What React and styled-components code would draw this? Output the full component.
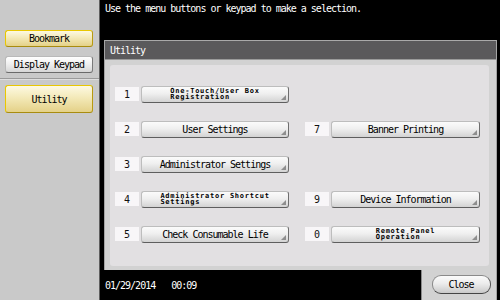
import React from 'react';
import styled, { createGlobalStyle, css } from 'styled-components';

const Global = createGlobalStyle`
  html, body { margin: 0; padding: 0; background: #000; }
  body { font-family: "DejaVu Sans Mono", "Liberation Mono", monospace; }
  #root { width: 500px; height: 300px; overflow: hidden; }
`;

const Screen = styled.div`
  display: flex;
  width: 500px;
  height: 300px;
  background: #000;
`;

const Sidebar = styled.aside`
  width: 100px;
  box-sizing: border-box;
  border-right: 1px solid #5e5e5e;
  background: #c9c9c9;
  display: flex;
  flex-direction: column;
`;

const SideGroup = styled.div`
  display: flex;
  flex-direction: column;
  gap: 9px;
  padding: ${(p) => p.$top}px 6px 0 5px;
`;

const Divider = styled.div`
  margin-top: 5px;
  height: 1px;
  background: #9a9a9a;
  border-bottom: 1px solid #dedede;
`;

const SideButton = styled.button`
  height: ${(p) => (p.$tall ? 28 : 17)}px;
  box-sizing: border-box;
  margin: 0;
  padding: 0;
  border-radius: 3px;
  font-family: inherit;
  font-size: 10px;
  letter-spacing: -1px;
  color: #000;
  ${(p) =>
    p.$active
      ? css`
          border: 1px solid #e9c700;
          border-right-color: #b89a10;
          border-bottom-color: #a88c10;
          background: linear-gradient(#fdf9e2, #f3e9b8 45%, #e4d188);
        `
      : css`
          border: 1px solid #b9b9b9;
          border-right-color: #7a7a7a;
          border-bottom-color: #6a6a6a;
          background: linear-gradient(#ffffff, #f0f0f0 45%, #d6d6d6);
        `}
`;

const Main = styled.main`
  flex: 1;
  display: flex;
  flex-direction: column;
  background: #000;
`;

const StatusBar = styled.div`
  height: 40px;
  box-sizing: border-box;
  padding: 4px 0 0 5px;
  color: #fff;
  font-size: 10px;
  line-height: 10px;
  letter-spacing: -1px;
`;

const Panel = styled.section`
  flex: 1;
  margin: 0 3px 0 4px;
  display: flex;
  flex-direction: column;
  background: #d2d2d2;
  border-left: 1px solid #a4a4a4;
  border-right: 1px solid #a4a4a4;
`;

const PanelHeader = styled.div`
  height: 20px;
  box-sizing: border-box;
  border-top: 1px solid #a9a9a9;
  border-bottom: 1px solid #9a9a9a;
  background: #5a595b;
  color: #fff;
  display: flex;
  align-items: center;
  padding-left: 5px;
  font-size: 10px;
  letter-spacing: -1px;
`;

const PanelBody = styled.div`
  flex: 1;
  display: flex;
  padding: 5px 7px 4px 5px;
`;

const InnerPanel = styled.div`
  flex: 1;
  background: #e2e0e2;
  border-radius: 3px;
  display: grid;
  grid-template-columns: 174px 175px;
  grid-auto-rows: 17px;
  column-gap: 16px;
  row-gap: 18px;
  padding: 21px 0 0 5px;
  align-content: start;
`;

const Entry = styled.div`
  display: flex;
  align-items: flex-start;
  grid-column: ${(p) => p.$col};
  grid-row: ${(p) => p.$row};
`;

const NumBox = styled.div`
  width: 24px;
  height: 14px;
  margin: 1px 2px 0 0;
  background: #f8f6f8;
  color: #111;
  font-size: 10px;
  display: flex;
  align-items: center;
  justify-content: center;
`;

const MenuButton = styled.button`
  position: relative;
  flex: 1;
  height: 17px;
  box-sizing: border-box;
  margin: 0;
  padding: 0;
  border-radius: 3px;
  border: 1px solid #bdbdbd;
  border-right-color: #6e6e6e;
  border-bottom-color: #5e5e5e;
  background: linear-gradient(#fbfbfb, #efefef 45%, #d3d3d3);
  font-family: inherit;
  color: #000;
  display: flex;
  align-items: center;
  justify-content: center;
  &::after {
    content: '';
    position: absolute;
    right: 2px;
    bottom: 2px;
    width: 0;
    height: 0;
    border-left: 5px solid transparent;
    border-bottom: 5px solid #8e8e8e;
  }
`;

const Label = styled.span`
  font-size: 10px;
  letter-spacing: -1px;
  white-space: nowrap;
`;

const SmallLabel = styled.span`
  font-size: 7px;
  font-weight: bold;
  line-height: 6px;
  letter-spacing: 0.75px;
  white-space: pre;
  text-align: left;
  margin-top: -1px;
`;

const Footer = styled.footer`
  height: 30px;
  display: flex;
`;

const DateTime = styled.div`
  flex: 1;
  display: flex;
  align-items: center;
  gap: 16px;
  padding: 0 0 0 5px;
  color: #fff;
  font-size: 10px;
  letter-spacing: -1px;
`;

const CloseTab = styled.div`
  width: 76px;
  margin-right: 3px;
  background: #d2d2d2;
  border-left: 1px solid #8a8a8a;
  border-right: 1px solid #a4a4a4;
  display: flex;
  align-items: flex-start;
  justify-content: center;
  padding-top: 5px;
  box-sizing: border-box;
`;

const CloseButton = styled.button`
  width: 59px;
  height: 19px;
  margin-left: 4px;
  box-sizing: border-box;
  border-radius: 9px;
  border: 1px solid #8a8a8a;
  border-right-color: #555;
  border-bottom-color: #444;
  background: linear-gradient(#fbfbfb, #ececec 45%, #c9c9c9);
  font-family: inherit;
  font-size: 10px;
  letter-spacing: -1px;
  color: #000;
  padding: 0;
`;

const entries = [
  { n: '1', col: 1, row: 1, small: 'One-Touch/User Box\nRegistration' },
  { n: '2', col: 1, row: 2, label: 'User Settings' },
  { n: '3', col: 1, row: 3, label: 'Administrator Settings' },
  { n: '4', col: 1, row: 4, small: 'Administrator Shortcut\nSettings' },
  { n: '5', col: 1, row: 5, label: 'Check Consumable Life' },
  { n: '7', col: 2, row: 2, label: 'Banner Printing' },
  { n: '9', col: 2, row: 4, label: 'Device Information' },
  { n: '0', col: 2, row: 5, small: 'Remote Panel\nOperation' },
];

export default function App() {
  return (
    <>
      <Global />
      <Screen>
        <Sidebar>
          <SideGroup $top={30}>
            <SideButton $active>Bookmark</SideButton>
            <SideButton>Display Keypad</SideButton>
          </SideGroup>
          <Divider />
          <SideGroup $top={5}>
            <SideButton $active $tall>Utility</SideButton>
          </SideGroup>
        </Sidebar>
        <Main>
          <StatusBar>Use the menu buttons or keypad to make a selection.</StatusBar>
          <Panel>
            <PanelHeader>Utility</PanelHeader>
            <PanelBody>
              <InnerPanel>
                {entries.map((e) => (
                  <Entry key={e.n} $col={e.col} $row={e.row}>
                    <NumBox>{e.n}</NumBox>
                    <MenuButton>
                      {e.small ? <SmallLabel>{e.small}</SmallLabel> : <Label>{e.label}</Label>}
                    </MenuButton>
                  </Entry>
                ))}
              </InnerPanel>
            </PanelBody>
          </Panel>
          <Footer>
            <DateTime>
              <span>01/29/2014</span>
              <span>00:09</span>
            </DateTime>
            <CloseTab>
              <CloseButton>Close</CloseButton>
            </CloseTab>
          </Footer>
        </Main>
      </Screen>
    </>
  );
}
